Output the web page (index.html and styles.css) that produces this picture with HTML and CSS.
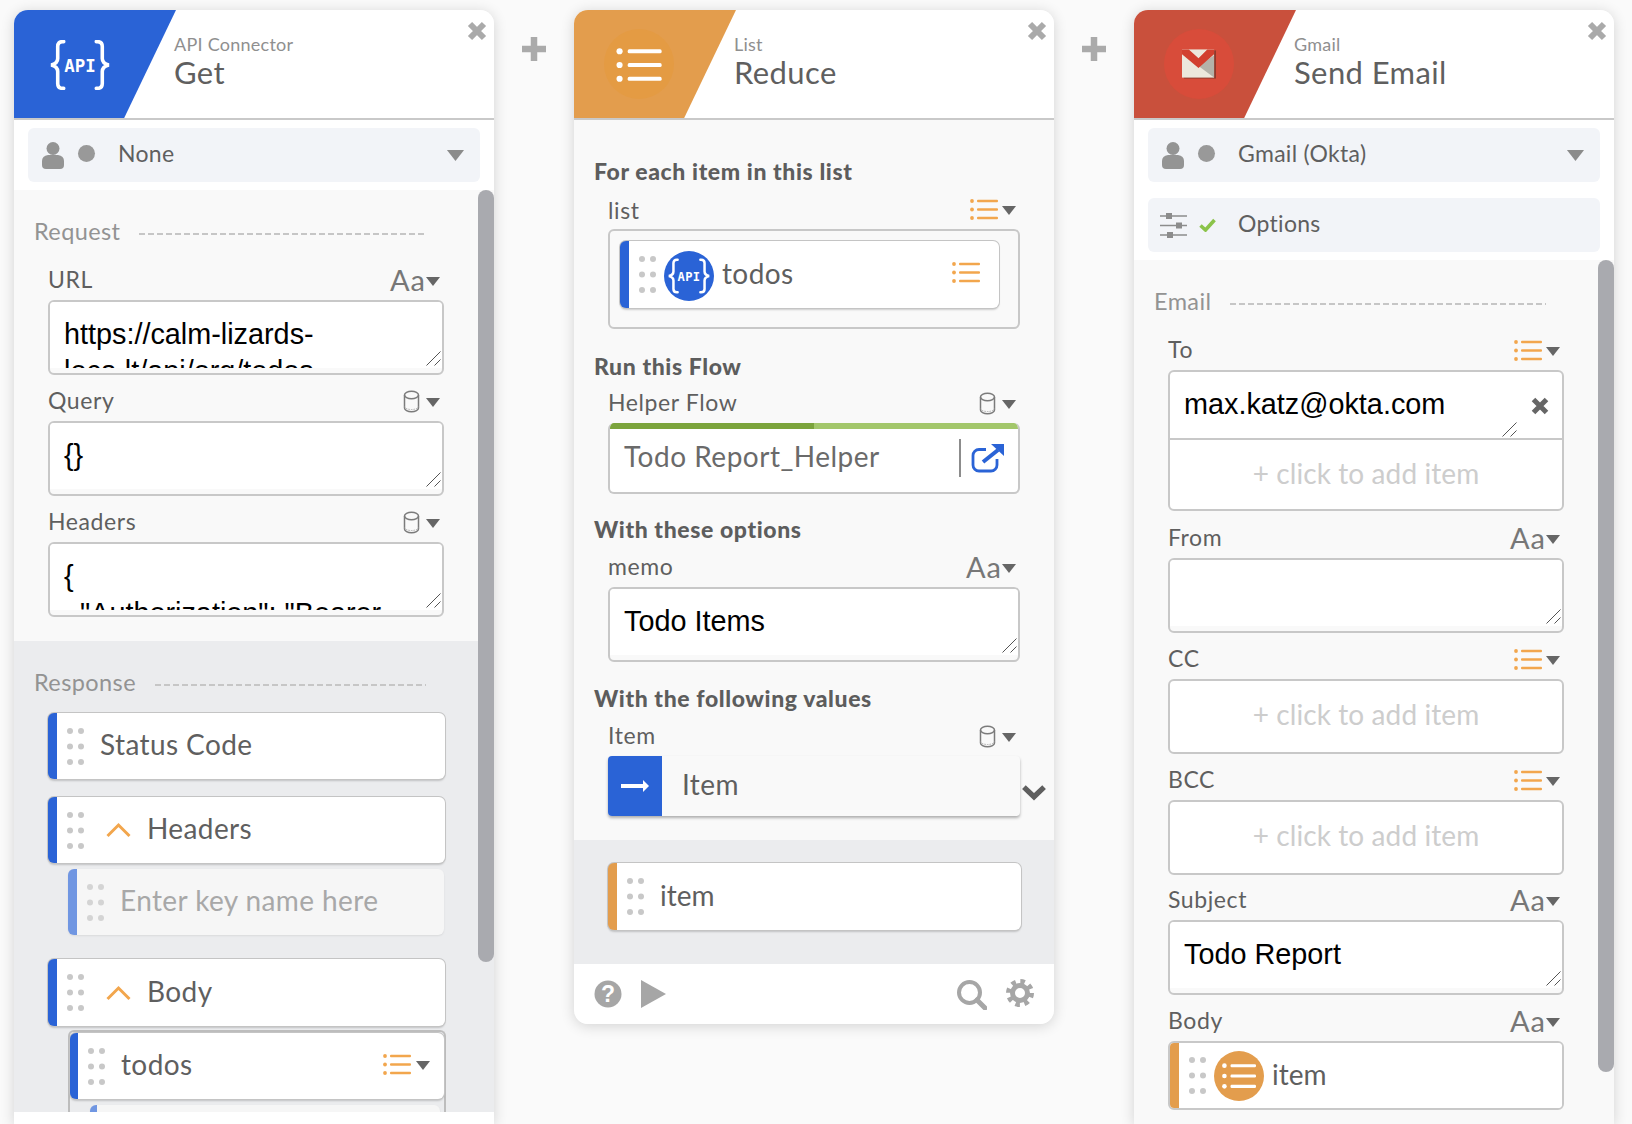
FILE: index.html
```html
<!DOCTYPE html>
<html lang="en">
<head>
    <meta charset="UTF-8">
    <meta name="viewport" content="width=device-width, initial-scale=1.0">
    <title>Flow Builder</title>
    <link rel="stylesheet" href="styles.css">
</head>
<body>

    <!-- shared icons -->
    <svg class="sprite" xmlns="http://www.w3.org/2000/svg">
        <symbol id="i-list" viewBox="0 0 28 21">
            <circle cx="2" cy="2" r="1.9"/><circle cx="2" cy="10.5" r="1.9"/><circle cx="2" cy="19" r="1.9"/>
            <rect x="7" y="0.8" width="21" height="2.5" rx="1"/><rect x="7" y="9.3" width="21" height="2.5" rx="1"/><rect x="7" y="17.8" width="21" height="2.5" rx="1"/>
        </symbol>
        <symbol id="i-cyl" viewBox="0 0 16 23">
            <path d="M1 5a7 3.8 0 0 1 14 0v13a7 3.8 0 0 1-14 0z" fill="none" stroke="#7b7b7b" stroke-width="1.5"/>
            <path d="M1 5a7 3.8 0 0 0 14 0" fill="none" stroke="#7b7b7b" stroke-width="1.5"/>
            <path d="M1 16.5a7 3 0 0 0 14 0" fill="none" stroke="#9a9a9a" stroke-width="0.8" stroke-dasharray="1.5 1"/>
        </symbol>
        <symbol id="i-dots" viewBox="0 0 17 37">
            <circle cx="3" cy="3" r="3"/><circle cx="14" cy="3" r="3"/>
            <circle cx="3" cy="18.5" r="3"/><circle cx="14" cy="18.5" r="3"/>
            <circle cx="3" cy="34" r="3"/><circle cx="14" cy="34" r="3"/>
        </symbol>
        <symbol id="i-grip" viewBox="0 0 15 15">
            <path d="M0.5 14.5L14.5 0.5M8.5 14.5L14.5 8.5" stroke="#555" stroke-width="1" fill="none"/>
        </symbol>
        <symbol id="i-person" viewBox="0 0 22 27">
            <circle cx="11" cy="6.5" r="6.5"/>
            <path d="M0 23v-4q0-5 6-6h10q6 1 6 6v4q0 4-4 4H4q-4 0-4-4z"/>
        </symbol>
        <symbol id="i-close" viewBox="0 0 22 22">
            <path d="M4 4L18 18M18 4L4 18" stroke="#aaa" stroke-width="6" fill="none"/>
        </symbol>
        <symbol id="i-plus" viewBox="0 0 24 24">
            <path d="M12 0.5V23.5M0.5 12H23.5" stroke="#aaa" stroke-width="6.5" fill="none" stroke-linecap="round"/>
        </symbol>
        <symbol id="i-api" viewBox="0 0 58 46">
            <path d="M14 1.5h-1q-4.500 0-4.500 4.500v11q0 4.500-6 6 6 1.500 6 6v11q0 4.500 4.500 4.500h1M44 1.500h1q4.500 0 4.500 4.500v11q0 4.500 6 6-6 1.500-6 6v11q0 4.500-4.500 4.500h-1" fill="none" stroke="#fff" stroke-width="3.3" stroke-linecap="round"/>
            <text x="29" y="29" text-anchor="middle" class="api-text">API</text>
        </symbol>
        <symbol id="i-caret" viewBox="0 0 14 9"><polygon points="0,0 14,0 7,9"/></symbol>
    </svg>

    <div class="board">

        <!-- API connector card -->
        <section class="card card-tall">
            <header class="card-head">
                <div class="banner banner-blue"><svg class="logo-api"><use href="#i-api"/></svg></div>
                <div class="titles">
                    <div class="subtitle">API Connector</div>
                    <div class="title">Get</div>
                </div>
                <svg class="close"><use href="#i-close"/></svg>
            </header>
            <div class="selectors">
                <div class="selector">
                    <svg class="person"><use href="#i-person"/></svg>
                    <span class="status-dot"></span>
                    <span class="selector-text">None</span>
                    <svg class="selector-caret"><use href="#i-caret"/></svg>
                </div>
            </div>
            <div class="scroll">
                <div class="scrollbar scrollbar-a"></div>
                <div class="section">
                    <div class="sec-head"><span>Request</span><i></i></div>
                    <div class="field">
                        <div class="field-head"><span>URL</span><span class="field-type"><b>Aa</b><svg class="caret"><use href="#i-caret"/></svg></span></div>
                        <div class="box"><div class="box-text">https://calm-lizards-<br>loca.lt/api/org/todos</div><svg class="grip"><use href="#i-grip"/></svg></div>
                    </div>
                    <div class="field">
                        <div class="field-head"><span>Query</span><span class="field-type"><svg class="cyl"><use href="#i-cyl"/></svg><svg class="caret"><use href="#i-caret"/></svg></span></div>
                        <div class="box"><div class="box-text">{}</div><svg class="grip"><use href="#i-grip"/></svg></div>
                    </div>
                    <div class="field">
                        <div class="field-head"><span>Headers</span><span class="field-type"><svg class="cyl"><use href="#i-cyl"/></svg><svg class="caret"><use href="#i-caret"/></svg></span></div>
                        <div class="box"><div class="box-text">{<br>&nbsp;&nbsp;"Authorization": "Bearer</div><svg class="grip"><use href="#i-grip"/></svg></div>
                    </div>
                </div>
                <div class="section section-dark">
                    <div class="sec-head sec-head-resp"><span>Response</span><i></i></div>
                    <div class="pill">
                        <svg class="dots"><use href="#i-dots"/></svg>
                        <span>Status Code</span>
                    </div>
                    <div class="pill pill-next">
                        <svg class="dots"><use href="#i-dots"/></svg>
                        <svg class="chev-up" viewBox="0 0 26 16"><path d="M2 14L13 3L24 14"/></svg>
                        <span>Headers</span>
                    </div>
                    <div class="pill pill-ghost">
                        <svg class="dots"><use href="#i-dots"/></svg>
                        <span>Enter key name here</span>
                    </div>
                    <div class="pill pill-body">
                        <svg class="dots"><use href="#i-dots"/></svg>
                        <svg class="chev-up" viewBox="0 0 26 16"><path d="M2 14L13 3L24 14"/></svg>
                        <span>Body</span>
                    </div>
                    <div class="tree">
                        <div class="pill pill-tree">
                            <svg class="dots"><use href="#i-dots"/></svg>
                            <span>todos</span>
                            <span class="pill-right"><svg class="list"><use href="#i-list"/></svg><svg class="caret"><use href="#i-caret"/></svg></span>
                        </div>
                        <div class="pill pill-ghost pill-deep"></div>
                    </div>
                </div>
            </div>
            <div class="foot-strip"></div>
        </section>

        <div class="plus"><svg><use href="#i-plus"/></svg></div>

        <!-- list reduce card -->
        <section class="card">
            <header class="card-head">
                <div class="banner banner-orange">
                    <span class="banner-circle circle-orange"><svg class="logo-list"><use href="#i-list"/></svg></span>
                </div>
                <div class="titles">
                    <div class="subtitle">List</div>
                    <div class="title">Reduce</div>
                </div>
                <svg class="close"><use href="#i-close"/></svg>
            </header>
            <div class="groups">
                <div class="group group-list">
                    <h3>For each item in this list</h3>
                    <div class="field">
                        <div class="field-head"><span>list</span><span class="field-type"><svg class="list"><use href="#i-list"/></svg><svg class="caret"><use href="#i-caret"/></svg></span></div>
                        <div class="box box-plain box-list">
                            <div class="pill pill-inbox">
                                <svg class="dots"><use href="#i-dots"/></svg>
                                <span class="round-blue"><svg class="logo-api-sm"><use href="#i-api"/></svg></span>
                                <span>todos</span>
                                <span class="pill-right"><svg class="list"><use href="#i-list"/></svg></span>
                            </div>
                        </div>
                    </div>
                </div>
                <div class="group group-flow">
                    <h3>Run this Flow</h3>
                    <div class="field">
                        <div class="field-head"><span>Helper Flow</span><span class="field-type"><svg class="cyl"><use href="#i-cyl"/></svg><svg class="caret"><use href="#i-caret"/></svg></span></div>
                        <div class="box box-plain box-flow">
                            <div class="flow-bar"><span></span></div>
                            <div class="flow-row">
                                <span class="flow-name">Todo Report_Helper</span>
                                <svg class="ext" viewBox="0 0 33 29">
                                    <path d="M15 5.5H8a6 6 0 0 0-6 6V21a6 6 0 0 0 6 6h12a6 6 0 0 0 6-6v-6" fill="none" stroke="#2a63d6" stroke-width="2.8"/>
                                    <path d="M12 18L27 6" fill="none" stroke="#2a63d6" stroke-width="4"/>
                                    <polygon points="20,0 33,0 33,12" fill="#2a63d6"/>
                                </svg>
                            </div>
                        </div>
                    </div>
                </div>
                <div class="group group-memo">
                    <h3>With these options</h3>
                    <div class="field">
                        <div class="field-head"><span>memo</span><span class="field-type"><b>Aa</b><svg class="caret"><use href="#i-caret"/></svg></span></div>
                        <div class="box"><div class="box-text">Todo Items</div><svg class="grip"><use href="#i-grip"/></svg></div>
                    </div>
                </div>
                <div class="group">
                    <h3>With the following values</h3>
                    <div class="field">
                        <div class="field-head"><span>Item</span><span class="field-type"><svg class="cyl"><use href="#i-cyl"/></svg><svg class="caret"><use href="#i-caret"/></svg></span></div>
                        <div class="value-row">
                            <span class="value-arrow"><svg viewBox="0 0 28 14"><rect y="5" width="23" height="4"/><polygon points="22,1 28,7 22,13"/></svg></span>
                            <span class="value-name">Item</span>
                            <svg class="chev-down" viewBox="0 0 24 16"><path d="M2.5 3L12 12L21.5 3"/></svg>
                        </div>
                    </div>
                </div>
            </div>
            <div class="section-dark out-zone">
                <div class="pill pill-orange">
                    <svg class="dots"><use href="#i-dots"/></svg>
                    <span>item</span>
                </div>
            </div>
            <footer class="card-foot">
                <svg class="foot-icon" viewBox="0 0 28 28"><circle cx="14" cy="14" r="13.5"/><text x="14" y="22" text-anchor="middle" class="help-mark">?</text></svg>
                <svg class="foot-play" viewBox="0 0 25 28"><polygon points="0,0 25,14 0,28"/></svg>
                <span class="foot-gap"></span>
                <svg class="foot-search" viewBox="0 0 30 30"><circle cx="12.5" cy="12.5" r="10.5" fill="none" stroke="#a6a6a6" stroke-width="4"/><path d="M20 20L28 28" stroke="#a6a6a6" stroke-width="5" stroke-linecap="round"/></svg>
                <svg class="foot-gear" viewBox="0 0 28 28"><circle cx="14" cy="14" r="11.5" fill="none" stroke="#a6a6a6" stroke-width="5" stroke-dasharray="4.5 4.53"/><circle cx="14" cy="14" r="7.5" fill="none" stroke="#a6a6a6" stroke-width="5"/></svg>
            </footer>
        </section>

        <div class="plus"><svg><use href="#i-plus"/></svg></div>

        <!-- gmail card -->
        <section class="card card-tall">
            <header class="card-head">
                <div class="banner banner-red">
                    <span class="banner-circle circle-red">
                        <svg class="logo-mail" viewBox="0 0 35 30">
                            <rect x="2" y="1" width="33" height="29" fill="#8f3a2c"/>
                            <rect width="33" height="29" fill="#ece8dc"/>
                            <polygon points="33,6 33,29 17,17" fill="#b4b2a9"/>
                            <polygon points="0,0 7,0 17,9 26,0 33,0 33,5 17,19 0,5" fill="#d2402f"/>
                        </svg>
                    </span>
                </div>
                <div class="titles">
                    <div class="subtitle">Gmail</div>
                    <div class="title">Send Email</div>
                </div>
                <svg class="close"><use href="#i-close"/></svg>
            </header>
            <div class="selectors">
                <div class="selector">
                    <svg class="person"><use href="#i-person"/></svg>
                    <span class="status-dot"></span>
                    <span class="selector-text">Gmail (Okta)</span>
                    <svg class="selector-caret"><use href="#i-caret"/></svg>
                </div>
                <div class="selector">
                    <svg class="sliders" viewBox="0 0 27 27">
                        <path d="M0 4h27M0 13.5h27M0 23h27" stroke="#8c8c8c" stroke-width="1.5"/>
                        <rect x="6" y="1" width="6" height="6" fill="#8c8c8c"/><rect x="16" y="10.5" width="6" height="6" fill="#8c8c8c"/><rect x="7" y="20" width="6" height="6" fill="#8c8c8c"/>
                    </svg>
                    <svg class="check" viewBox="0 0 17 14"><path d="M1.5 7.5L6.5 12L15.5 2" fill="none" stroke="#8bc34a" stroke-width="3.6"/></svg>
                    <span class="selector-text">Options</span>
                </div>
            </div>
            <div class="scroll">
                <div class="scrollbar scrollbar-c"></div>
                <div class="section">
                    <div class="sec-head sec-head-mail"><span>Email</span><i></i></div>
                    <div class="field field-loose">
                        <div class="field-head"><span>To</span><span class="field-type"><svg class="list"><use href="#i-list"/></svg><svg class="caret"><use href="#i-caret"/></svg></span></div>
                        <div class="box box-plain box-multi">
                            <div class="multi-item">
                                <span>max.katz@okta.com</span>
                                <svg class="remove" viewBox="0 0 20 20"><path d="M3.5 3.5L16.5 16.5M16.5 3.5L3.5 16.5" stroke="#666" stroke-width="5"/></svg>
                                <svg class="grip grip-multi"><use href="#i-grip"/></svg>
                            </div>
                            <div class="add-item add-item-multi">+ click to add item</div>
                        </div>
                    </div>
                    <div class="field">
                        <div class="field-head"><span>From</span><span class="field-type"><b>Aa</b><svg class="caret"><use href="#i-caret"/></svg></span></div>
                        <div class="box"><div class="box-text"></div><svg class="grip"><use href="#i-grip"/></svg></div>
                    </div>
                    <div class="field">
                        <div class="field-head"><span>CC</span><span class="field-type"><svg class="list"><use href="#i-list"/></svg><svg class="caret"><use href="#i-caret"/></svg></span></div>
                        <div class="box box-plain"><div class="add-item">+ click to add item</div></div>
                    </div>
                    <div class="field field-tight">
                        <div class="field-head"><span>BCC</span><span class="field-type"><svg class="list"><use href="#i-list"/></svg><svg class="caret"><use href="#i-caret"/></svg></span></div>
                        <div class="box box-plain"><div class="add-item">+ click to add item</div></div>
                    </div>
                    <div class="field">
                        <div class="field-head"><span>Subject</span><span class="field-type"><b>Aa</b><svg class="caret"><use href="#i-caret"/></svg></span></div>
                        <div class="box"><div class="box-text">Todo Report</div><svg class="grip"><use href="#i-grip"/></svg></div>
                    </div>
                    <div class="field">
                        <div class="field-head"><span>Body</span><span class="field-type"><b>Aa</b><svg class="caret"><use href="#i-caret"/></svg></span></div>
                        <div class="box box-plain box-body">
                            <div class="pill pill-fill">
                                <svg class="dots"><use href="#i-dots"/></svg>
                                <span class="round-orange"><svg class="logo-list-sm"><use href="#i-list"/></svg></span>
                                <span>item</span>
                            </div>
                        </div>
                    </div>
                </div>
            </div>
        </section>

    </div>

</body>
</html>
```

FILE: styles.css
```css
html, body {
    margin: 0;
    padding: 0;
    height: 100%;
    overflow: hidden;
    background-color: #fafafa;
    color: #5f5f5f;
    font-family: Lato, "Open Sans", sans-serif;
}

.sprite {
    display: none;
}

.api-text {
    font-family: "DejaVu Sans Mono", monospace;
    font-weight: bold;
    font-size: 16px;
    fill: #fff;
}

.help-mark {
    font-family: "Liberation Sans", sans-serif;
    font-weight: bold;
    font-size: 23px;
    fill: #fff;
}

.board {
    display: flex;
    align-items: flex-start;
    padding: 10px 0 0 14px;
}

.plus {
    width: 80px;
    display: flex;
    justify-content: center;
    margin-top: 27px;
}

.plus svg {
    width: 24px;
    height: 24px;
}

.card {
    width: 480px;
    position: relative;
    flex-shrink: 0;
    display: flex;
    flex-direction: column;
    background-color: #f9f9f9;
    border-radius: 14px;
    box-shadow: 0 2px 14px rgba(0, 0, 0, 0.16);
    overflow: hidden;
}

.card-tall {
    height: 1114px;
    border-radius: 14px 14px 0 0;
}

/* header with the slanted banner */
.card-head {
    height: 108px;
    display: flex;
    flex-shrink: 0;
    background-color: #fff;
    border-bottom: 2px solid #c9c9c9;
}

.banner {
    width: 162px;
    display: flex;
    align-items: center;
    clip-path: polygon(0 0, 100% 0, 68% 100%, 0 100%);
}

.banner-blue {
    background-color: #2a63d6;
}

.banner-orange {
    background-color: #e39d4d;
}

.banner-red {
    background-color: #c9503c;
}

.banner-circle {
    width: 70px;
    height: 70px;
    margin-left: 30px;
    border-radius: 50%;
    display: flex;
    align-items: center;
    justify-content: center;
}

.circle-orange {
    background-color: #e49b43;
    padding-top: 1px;
    box-sizing: border-box;
}

.circle-red {
    background-color: #d84c3a;
}

.logo-api {
    width: 64px;
    height: 50px;
    margin-left: 34px;
    margin-top: 2px;
}

.logo-list {
    width: 46px;
    height: 34px;
    fill: #fff;
}

.logo-mail {
    width: 34px;
    height: 30px;
}

.titles {
    margin-left: -2px;
    padding-top: 23px;
}

.subtitle {
    font-size: 18px;
    line-height: 22px;
    letter-spacing: 0.25px;
    color: #8f8f8f;
}

.title {
    font-size: 31px;
    line-height: 34px;
    letter-spacing: 0.4px;
}

.close {
    position: absolute;
    top: 10px;
    right: 6px;
    width: 22px;
    height: 22px;
}

/* dropdown strips under the header */
.selectors {
    flex-shrink: 0;
    display: flex;
    flex-direction: column;
    gap: 16px;
    padding: 8px 14px;
    background-color: #fff;
}

.selector {
    height: 54px;
    display: flex;
    align-items: center;
    padding-left: 14px;
    padding-right: 15px;
    background-color: #f2f4f8;
    border-radius: 6px;
    font-size: 23px;
}

.person {
    width: 22px;
    height: 27px;
    fill: #949494;
}

.status-dot {
    width: 17px;
    height: 17px;
    margin-left: 14px;
    margin-bottom: 4px;
    border-radius: 50%;
    background-color: #999;
}

.selector-text {
    margin-left: 23px;
    margin-top: -4px;
    flex: 1;
    letter-spacing: 0.3px;
}

.selector-caret {
    width: 19px;
    height: 11px;
    fill: #8b8b8b;
}

.sliders {
    width: 27px;
    height: 27px;
    margin-left: -2px;
}

.check {
    width: 17px;
    height: 14px;
    margin-left: 12px;
}

.selector .check + .selector-text {
    margin-left: 22px;
}

/* scrolling part */
.scroll {
    position: relative;
    flex: 1;
    min-height: 0;
    overflow: hidden;
}

.scrollbar {
    position: absolute;
    top: 0;
    right: 0;
    width: 16px;
    border-radius: 8px;
    background-color: #a9aaaf;
    z-index: 2;
}

.scrollbar-a {
    height: 772px;
}

.scrollbar-c {
    height: 812px;
}

.section {
    padding: 30px 0 10px 20px;
}

.section-dark {
    background-color: #ebecee;
}

.sec-head {
    width: 392px;
    height: 24px;
    display: flex;
    align-items: center;
    gap: 19px;
    margin-bottom: 24px;
    font-size: 23.5px;
    letter-spacing: 0.4px;
    color: #939393;
}

.sec-head span {
    margin-top: -3px;
}

/* the dashed rule next to a section name */
.sec-head i {
    flex: 1;
    height: 2px;
    margin-top: 4px;
    background-image: repeating-linear-gradient(90deg, #c6c6c6 0, #c6c6c6 6px, transparent 6px, transparent 9px);
}

.sec-head-resp {
    margin-bottom: 18px;
}

.field {
    margin-left: 14px;
    width: 396px;
    margin-bottom: 14px;
}

.field-loose {
    margin-bottom: 15px;
}

.field-tight {
    margin-bottom: 13px;
}

.field-head {
    height: 24px;
    margin-bottom: 8px;
    padding-right: 4px;
    display: flex;
    align-items: center;
    justify-content: space-between;
    font-size: 23px;
    letter-spacing: 0.6px;
}

.field-head > span:first-child {
    margin-top: -2px;
}

.group-list .field-head > span:first-child {
    margin-top: 1px;
}

.field-type {
    display: flex;
    align-items: center;
    gap: 3px;
}

.field-type b {
    font-weight: normal;
    font-size: 29px;
    letter-spacing: 1px;
    margin-top: -2px;
    margin-right: -3px;
    color: #777;
}

.caret {
    width: 14px;
    height: 9px;
    fill: #666;
    margin-top: 3px;
}

.cyl {
    width: 17px;
    height: 23px;
    margin-right: 3px;
}

.list {
    width: 28px;
    height: 21px;
    margin-right: 1px;
    margin-top: 1px;
    fill: #f2a64d;
}

/* text boxes */
.box {
    position: relative;
    box-sizing: border-box;
    height: 75px;
    border: 2px solid #c8c8c8;
    border-radius: 6px;
    background-color: #f9f9f9;
    overflow: hidden;
}

.box-text {
    box-sizing: border-box;
    height: 66px;
    padding: 14px 14px 0;
    overflow: hidden;
    background-color: #fff;
    color: #000;
    font-family: "Liberation Sans", Arial, sans-serif;
    font-size: 28.8px;
    line-height: 37px;
}

.grip {
    position: absolute;
    right: 1px;
    bottom: 7px;
    width: 15px;
    height: 15px;
}

.box-plain {
    background-color: #fff;
}

.box-list {
    height: 100px;
    margin-top: 1px;
    padding: 10px 18px 0 10px;
    background-color: #f9f9f9;
}

.box-flow {
    height: 71px;
    border-top: 0;
}

.flow-bar {
    height: 6px;
    margin: 0 -2px;
    background-color: #a3c76b;
}

.flow-bar span {
    display: block;
    width: 50%;
    height: 6px;
    background-color: #7ba43c;
}

.flow-row {
    display: flex;
    align-items: center;
    justify-content: space-between;
    padding: 10px 14px 0 14px;
}

.flow-name {
    flex: 1;
    font-size: 28px;
    letter-spacing: 0.5px;
    color: #6a6a6a;
    border-right: 2px solid #8c8c8c;
    height: 38px;
    line-height: 34px;
}

.ext {
    width: 33px;
    height: 29px;
    margin-left: 10px;
}

.box-multi {
    height: 141px;
}

.multi-item {
    position: relative;
    box-sizing: border-box;
    height: 68px;
    padding: 14px 14px 0;
    border-bottom: 2px solid #c8c8c8;
    color: #000;
    font-family: "Liberation Sans", Arial, sans-serif;
    font-size: 28.8px;
    line-height: 37px;
}

.remove {
    position: absolute;
    top: 24px;
    right: 12px;
    width: 20px;
    height: 20px;
}

.grip-multi {
    right: 45px;
    bottom: 1px;
}

.add-item {
    box-sizing: border-box;
    height: 71px;
    padding-bottom: 6px;
    display: flex;
    align-items: center;
    justify-content: center;
    font-size: 28px;
    letter-spacing: 0.1px;
    color: #cdcdcd;
}

.add-item-multi {
    height: 69px;
    padding-bottom: 4px;
}

.box-body {
    height: 69px;
}

/* pills */
.pill {
    box-sizing: border-box;
    height: 66px;
    width: 397px;
    margin-left: 14px;
    display: flex;
    align-items: center;
    background-color: #fff;
    border-left: 9px solid #2a63d6;
    border-radius: 6px;
    box-shadow: 0 0 0 1px #c4c4c4, 0 2px 2px rgba(0, 0, 0, 0.18);
    font-size: 28px;
    letter-spacing: 0.4px;
}

.pill > span {
    margin-top: -4px;
}

.dots {
    width: 17px;
    height: 37px;
    margin-left: 10px;
    margin-right: 16px;
    flex-shrink: 0;
    fill: #c8c8c8;
}

.chev-up {
    width: 27px;
    height: 16px;
    margin-right: 15px;
    margin-left: 5px;
}

.chev-up path {
    fill: none;
    stroke: #f2a64d;
    stroke-width: 3;
}

.pill-next {
    margin-top: 18px;
}

.pill-ghost {
    width: 376px;
    margin-left: 34px;
    margin-top: 6px;
    background-color: #f6f6f6;
    border-left-color: #7096e2;
    box-shadow: 0 1px 2px rgba(0, 0, 0, 0.08);
    color: #a8a8a8;
}

.pill-ghost .dots {
    fill: #d4d4d4;
}

.pill-body {
    margin-top: 24px;
    height: 67px;
}

.tree {
    width: 374px;
    margin: 4px 0 0 34px;
    padding-top: 1px;
    height: 140px;
    border: 2px solid #bdbdbd;
    border-bottom: 0;
    border-radius: 6px 6px 0 0;
}

.pill-tree {
    width: 374px;
    margin-left: 0;
    border-left-width: 8px;
}

.pill .pill-right {
    margin-left: auto;
    margin-right: 14px;
    display: flex;
    align-items: center;
    gap: 4px;
}

.pill-deep {
    width: 350px;
    margin-left: 20px;
    border-left-width: 7px;
}

.foot-strip {
    height: 12px;
    flex-shrink: 0;
    background-color: #fff;
}

/* middle card */
.groups {
    padding: 38px 0 0 20px;
    box-sizing: border-box;
    height: 720px;
}

.group {
    margin-bottom: 24px;
}

.group-flow {
    margin-bottom: 22px;
}

.group-memo {
    margin-bottom: 23px;
}

.group h3 {
    margin: 0 0 13px;
    height: 26px;
    font-size: 23px;
    line-height: 26px;
    font-weight: 900;
    letter-spacing: 0.6px;
    color: #5d5d5d;
}

.group-flow h3 {
    margin-bottom: 12px;
}

.group .field {
    width: 412px;
    margin-bottom: 0;
}

.pill-inbox {
    width: 379px;
    margin-left: 0;
    height: 67px;
}

.pill-inbox .list {
    margin-right: 5px;
    margin-top: 0;
}

.pill .round-blue, .pill .round-orange {
    width: 50px;
    height: 50px;
    margin-left: -8px;
    margin-right: 8px;
    margin-top: 0;
    flex-shrink: 0;
    border-radius: 50%;
    display: flex;
    align-items: center;
    justify-content: center;
}

.pill .round-blue {
    margin-top: 3px;
    background-color: #2a63d6;
}

.pill .round-orange {
    background-color: #e39d4d;
}

.logo-api-sm {
    width: 44px;
    height: 36px;
}

.logo-list-sm {
    width: 34px;
    height: 26px;
    fill: #fff;
}

.value-row {
    position: relative;
    height: 60px;
    display: flex;
    align-items: center;
    border-radius: 4px;
    box-shadow: 0 2px 3px rgba(0, 0, 0, 0.3);
    font-size: 28px;
    letter-spacing: 0.4px;
    background-color: #f9f9f9;
}

.value-arrow {
    width: 54px;
    height: 60px;
    display: flex;
    align-items: center;
    justify-content: center;
    background-color: #2a63d6;
    border-radius: 4px 0 0 4px;
    fill: #fff;
}

.value-arrow svg {
    width: 28px;
    height: 14px;
}

.value-name {
    margin-left: 20px;
    margin-top: -4px;
}

.chev-down {
    position: absolute;
    right: -27px;
    top: 28px;
    width: 26px;
    height: 17px;
}

.chev-down path {
    fill: none;
    stroke: #5f5f5f;
    stroke-width: 5;
}

.out-zone {
    height: 124px;
    padding-top: 23px;
    box-sizing: border-box;
}

.pill-orange {
    width: 413px;
    margin-left: 34px;
    height: 67px;
    border-left-color: #e39d4d;
    letter-spacing: 0;
}

.card-foot {
    height: 60px;
    box-sizing: border-box;
    padding: 16px 20px 0;
    display: flex;
    align-items: flex-start;
    background-color: #fff;
}

.foot-icon {
    width: 28px;
    height: 28px;
    fill: #a6a6a6;
}

.foot-play {
    width: 25px;
    height: 28px;
    margin-left: 19px;
    fill: #a6a6a6;
}

.foot-gap {
    flex: 1;
}

.foot-search {
    width: 30px;
    height: 30px;
}

.foot-gear {
    width: 28px;
    height: 28px;
    margin-left: 19px;
    margin-top: -1px;
}

.box-body .pill-fill {
    width: 100%;
    height: 100%;
    margin-left: 0;
    border-left-color: #e39d4d;
    box-shadow: none;
    border-radius: 0;
    letter-spacing: 0;
}
```
